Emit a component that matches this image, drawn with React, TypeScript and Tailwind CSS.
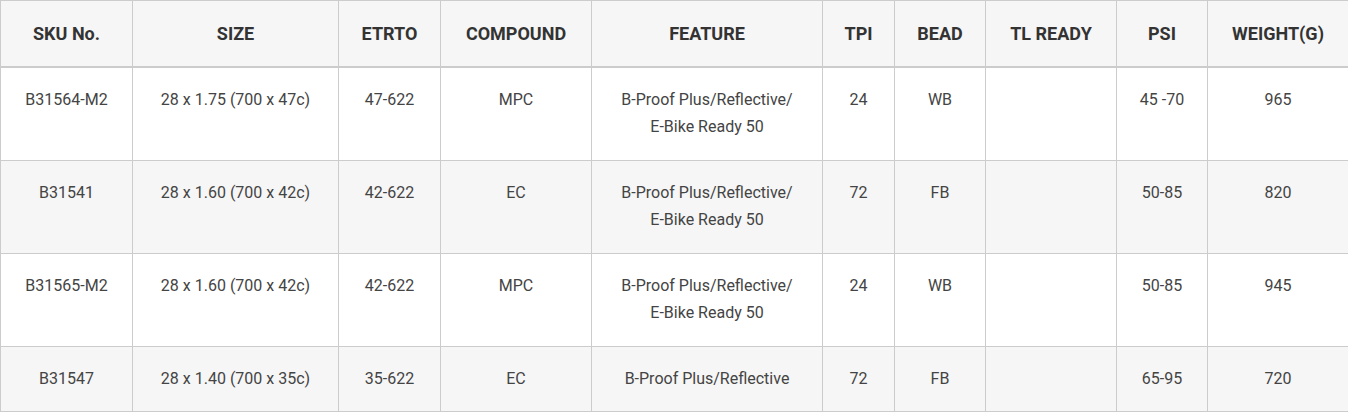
const headers = ["SKU No.", "SIZE", "ETRTO", "COMPOUND", "FEATURE", "TPI", "BEAD", "TL READY", "PSI", "WEIGHT(G)"];

const widths = ["w-[132px]", "w-[206px]", "w-[102px]", "w-[151px]", "w-[231px]", "w-[72px]", "w-[91px]", "w-[131px]", "w-[91px]", "w-[141px]"];

const rows = [
    ["B31564-M2", "28 x 1.75 (700 x 47c)", "47-622", "MPC", "B-Proof Plus/Reflective/\nE-Bike Ready 50", "24", "WB", "", "45 -70", "965"],
    ["B31541", "28 x 1.60 (700 x 42c)", "42-622", "EC", "B-Proof Plus/Reflective/\nE-Bike Ready 50", "72", "FB", "", "50-85", "820"],
    ["B31565-M2", "28 x 1.60 (700 x 42c)", "42-622", "MPC", "B-Proof Plus/Reflective/\nE-Bike Ready 50", "24", "WB", "", "50-85", "945"],
    ["B31547", "28 x 1.40 (700 x 35c)", "35-622", "EC", "B-Proof Plus/Reflective", "72", "FB", "", "65-95", "720"],
];

export default function App() {
    return (
        <div className="w-[1348px] overflow-hidden bg-white font-['Roboto',sans-serif]">
            <table className="w-[1349px] table-fixed border-collapse border-b-2 border-[#cccccc] text-center">
                <colgroup>
                    {widths.map((w, i) => (
                        <col key={i} className={w} />
                    ))}
                </colgroup>
                <thead>
                    <tr className="h-[66px] bg-[#f6f6f6]">
                        {headers.map((h) => (
                            <th
                                key={h}
                                className="border border-b-2 border-[#cccccc] px-1 text-[18px] font-bold leading-[27px] text-[#333333]"
                            >
                                {h}
                            </th>
                        ))}
                    </tr>
                </thead>
                <tbody>
                    {rows.map((row, r) => (
                        <tr key={r} className={r % 2 === 1 ? "bg-[#f6f6f6]" : "bg-white"}>
                            {row.map((cell, c) => (
                                <td
                                    key={c}
                                    className="border border-[#cccccc] px-2 pt-[18px] pb-[19px] align-top text-[16px] leading-[27.5px] text-[#444444] whitespace-pre-line"
                                >
                                    {cell}
                                </td>
                            ))}
                        </tr>
                    ))}
                </tbody>
            </table>
        </div>
    );
}
